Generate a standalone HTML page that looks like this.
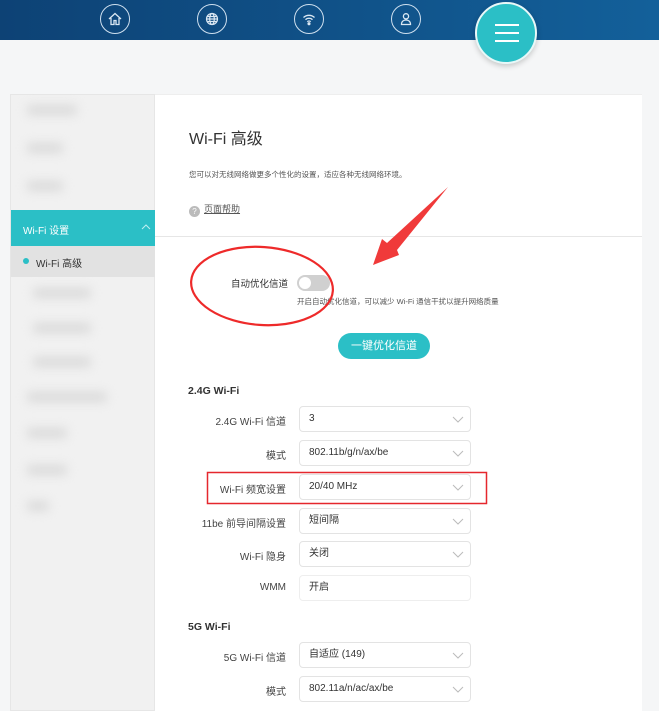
<!DOCTYPE html>
<html><head><meta charset="utf-8"><style>
*{margin:0;padding:0;box-sizing:border-box}
body{width:659px;height:711px;overflow:hidden;background:#f5f6f7;font-family:"Liberation Sans","Noto Sans CJK SC",sans-serif;position:relative;color:#333}
.hdr{position:absolute;left:0;top:0;width:659px;height:40px;background:linear-gradient(90deg,#0d4275,#13609a)}
.ic{position:absolute;top:4px;width:30px;height:30px;border:1.3px solid #cfe0ef;border-radius:50%}
.ic svg{position:absolute;left:6px;top:6px}
.menu{position:absolute;left:475px;top:2px;width:62px;height:62px;border-radius:50%;background:#2bbfc6;border:2px solid #e8f8f8;box-shadow:0 2px 6px rgba(0,0,0,.2)}
.menu i{position:absolute;left:18px;width:24px;height:2px;background:#fff}
.side{position:absolute;left:10px;top:94px;width:145px;height:617px;background:#f1f1f1;border:1px solid #e6e6e6}
.blur{position:absolute;height:10px;background:#dadada;filter:blur(5px);border-radius:4px}
.main{position:absolute;left:155px;top:94px;width:487px;height:617px;background:#fff;border-top:1px solid #eee}
.t{position:absolute;white-space:nowrap}
.lbl{position:absolute;right:373px;font-size:10px;color:#444;white-space:nowrap;text-align:right}
.sel{position:absolute;left:299px;width:172px;height:26px;border:1px solid #e3e3e3;border-radius:4px;font-size:10px;line-height:12px;color:#333;padding:6px 0 0 9px}
.sel svg{position:absolute;right:6px;top:9px}
</style></head><body>
<div class="hdr"></div>
<div class="ic" style="left:100px"><svg width="16" height="16" viewBox="0 0 16 16" fill="none" stroke="#dbe8f3" stroke-width="1.3"><path d="M2 8L8 2.5 14 8M4 7v6.5h3v-4h2v4h3V7"/></svg></div>
<div class="ic" style="left:197px"><svg width="16" height="16" viewBox="0 0 16 16" fill="none" stroke="#dbe8f3" stroke-width="1.2"><circle cx="8" cy="8" r="5.5"/><ellipse cx="8" cy="8" rx="2.3" ry="5.5"/><path d="M2.5 8h11M3.5 5.5h9M3.5 10.5h9"/></svg></div>
<div class="ic" style="left:294px"><svg width="16" height="16" viewBox="0 0 16 16" fill="none" stroke="#dbe8f3" stroke-width="1.3"><path d="M2.5 6.5a8 8 0 0 1 11 0M4.5 8.7a5 5 0 0 1 7 0M6.3 10.7a2.4 2.4 0 0 1 3.4 0"/><circle cx="8" cy="12.7" r=".9" fill="#dbe8f3"/></svg></div>
<div class="ic" style="left:391px"><svg width="16" height="16" viewBox="0 0 16 16" fill="none" stroke="#dbe8f3" stroke-width="1.3"><circle cx="8" cy="5.3" r="2.6"/><path d="M3.5 13.5c0-3 2-4.5 4.5-4.5s4.5 1.5 4.5 4.5z"/></svg></div>
<div class="menu"><i style="top:20px"></i><i style="top:28px"></i><i style="top:36px"></i></div>

<div class="side">
<div class="blur" style="left:16px;top:10px;width:50px"></div>
<div class="blur" style="left:16px;top:48px;width:36px"></div>
<div class="blur" style="left:16px;top:86px;width:36px"></div>
<div style="position:absolute;left:0;top:115px;width:144px;height:36px;background:#2bbfc6;color:#fff;font-size:10px;padding:12px 0 0 12px">Wi-Fi 设置<svg style="position:absolute;right:4px;top:14px" width="10" height="6"><path d="M1 5l4-4 4 4" fill="none" stroke="#bfeef0" stroke-width="1"/></svg></div>
<div style="position:absolute;left:0;top:151px;width:144px;height:31px;background:#e2e2e2;font-size:10px;color:#333;padding:9px 0 0 25px"><span style="position:absolute;left:12px;top:12px;width:6px;height:6px;border-radius:50%;background:#2bbfc6"></span>Wi-Fi 高级</div>
<div class="blur" style="left:22px;top:193px;width:58px"></div>
<div class="blur" style="left:22px;top:228px;width:58px"></div>
<div class="blur" style="left:22px;top:262px;width:58px"></div>
<div class="blur" style="left:16px;top:297px;width:80px"></div>
<div class="blur" style="left:16px;top:333px;width:40px"></div>
<div class="blur" style="left:16px;top:370px;width:40px"></div>
<div class="blur" style="left:16px;top:406px;width:22px"></div>
</div>

<div class="main"></div>
<div class="t" style="left:189px;top:125px;font-size:16px;color:#333">Wi-Fi 高级</div>
<div class="t" style="left:189px;top:169px;font-size:7.5px;color:#555">您可以对无线网络做更多个性化的设置，适应各种无线网络环境。</div>
<div class="t" style="left:189px;top:202px;font-size:9px;color:#555"><span style="display:inline-block;width:11px;height:11px;border-radius:50%;background:#bbb;color:#fff;font-size:8px;text-align:center;line-height:11px;vertical-align:-2px;margin-right:4px">?</span><u>页面帮助</u></div>
<div style="position:absolute;left:155px;top:236px;width:487px;height:1px;background:#e6e6e6"></div>

<div class="t" style="left:231px;top:276px;font-size:9.5px;color:#333">自动优化信道</div>
<div style="position:absolute;left:297px;top:275px;width:33px;height:16px;border-radius:8px;background:#d0d0d0"><span style="position:absolute;left:2px;top:2px;width:12px;height:12px;border-radius:50%;background:#fff"></span></div>
<div class="t" style="left:297px;top:296px;font-size:7.5px;color:#555">开启自动优化信道，可以减少 Wi-Fi 通信干扰以提升网络质量</div>
<div style="position:absolute;left:338px;top:333px;width:92px;height:26px;border-radius:13px;background:#2bbfc6;color:#fff;font-size:11px;text-align:center;line-height:26px">一键优化信道</div>

<div class="t" style="left:188px;top:385px;font-size:10.5px;font-weight:bold;color:#333">2.4G Wi-Fi</div>
<div class="lbl" style="top:413px">2.4G Wi-Fi 信道</div><div class="sel" style="top:406px">3<svg width="12" height="7"><path d="M1 1l5 5 5-5" fill="none" stroke="#bbb"/></svg></div>
<div class="lbl" style="top:447px">模式</div><div class="sel" style="top:440px">802.11b/g/n/ax/be<svg width="12" height="7"><path d="M1 1l5 5 5-5" fill="none" stroke="#bbb"/></svg></div>
<div class="lbl" style="top:481px">Wi-Fi 频宽设置</div><div class="sel" style="top:474px">20/40 MHz<svg width="12" height="7"><path d="M1 1l5 5 5-5" fill="none" stroke="#bbb"/></svg></div>
<div class="lbl" style="top:515px">11be 前导间隔设置</div><div class="sel" style="top:508px">短间隔<svg width="12" height="7"><path d="M1 1l5 5 5-5" fill="none" stroke="#bbb"/></svg></div>
<div class="lbl" style="top:548px">Wi-Fi 隐身</div><div class="sel" style="top:541px">关闭<svg width="12" height="7"><path d="M1 1l5 5 5-5" fill="none" stroke="#bbb"/></svg></div>
<div class="lbl" style="top:582px">WMM</div><div class="sel" style="top:575px;border-color:#eee">开启</div>

<div class="t" style="left:188px;top:621px;font-size:10.5px;font-weight:bold;color:#333">5G Wi-Fi</div>
<div class="lbl" style="top:649px">5G Wi-Fi 信道</div><div class="sel" style="top:642px">自适应 (149)<svg width="12" height="7"><path d="M1 1l5 5 5-5" fill="none" stroke="#bbb"/></svg></div>
<div class="lbl" style="top:683px">模式</div><div class="sel" style="top:676px">802.11a/n/ac/ax/be<svg width="12" height="7"><path d="M1 1l5 5 5-5" fill="none" stroke="#bbb"/></svg></div>

<svg style="position:absolute;left:0;top:0" width="659" height="711">
<ellipse cx="262" cy="286" rx="71" ry="39" fill="none" stroke="#ee2a2a" stroke-width="2.2" transform="rotate(4 262 286)"/>
<path d="M448 187L397 250 399 255 373 265 382 239 387 243Z" fill="#f03a3a"/>
<rect x="207.5" y="472.5" width="279" height="31" fill="none" stroke="#e5272d" stroke-width="1.5"/>
</svg>
</body></html>
